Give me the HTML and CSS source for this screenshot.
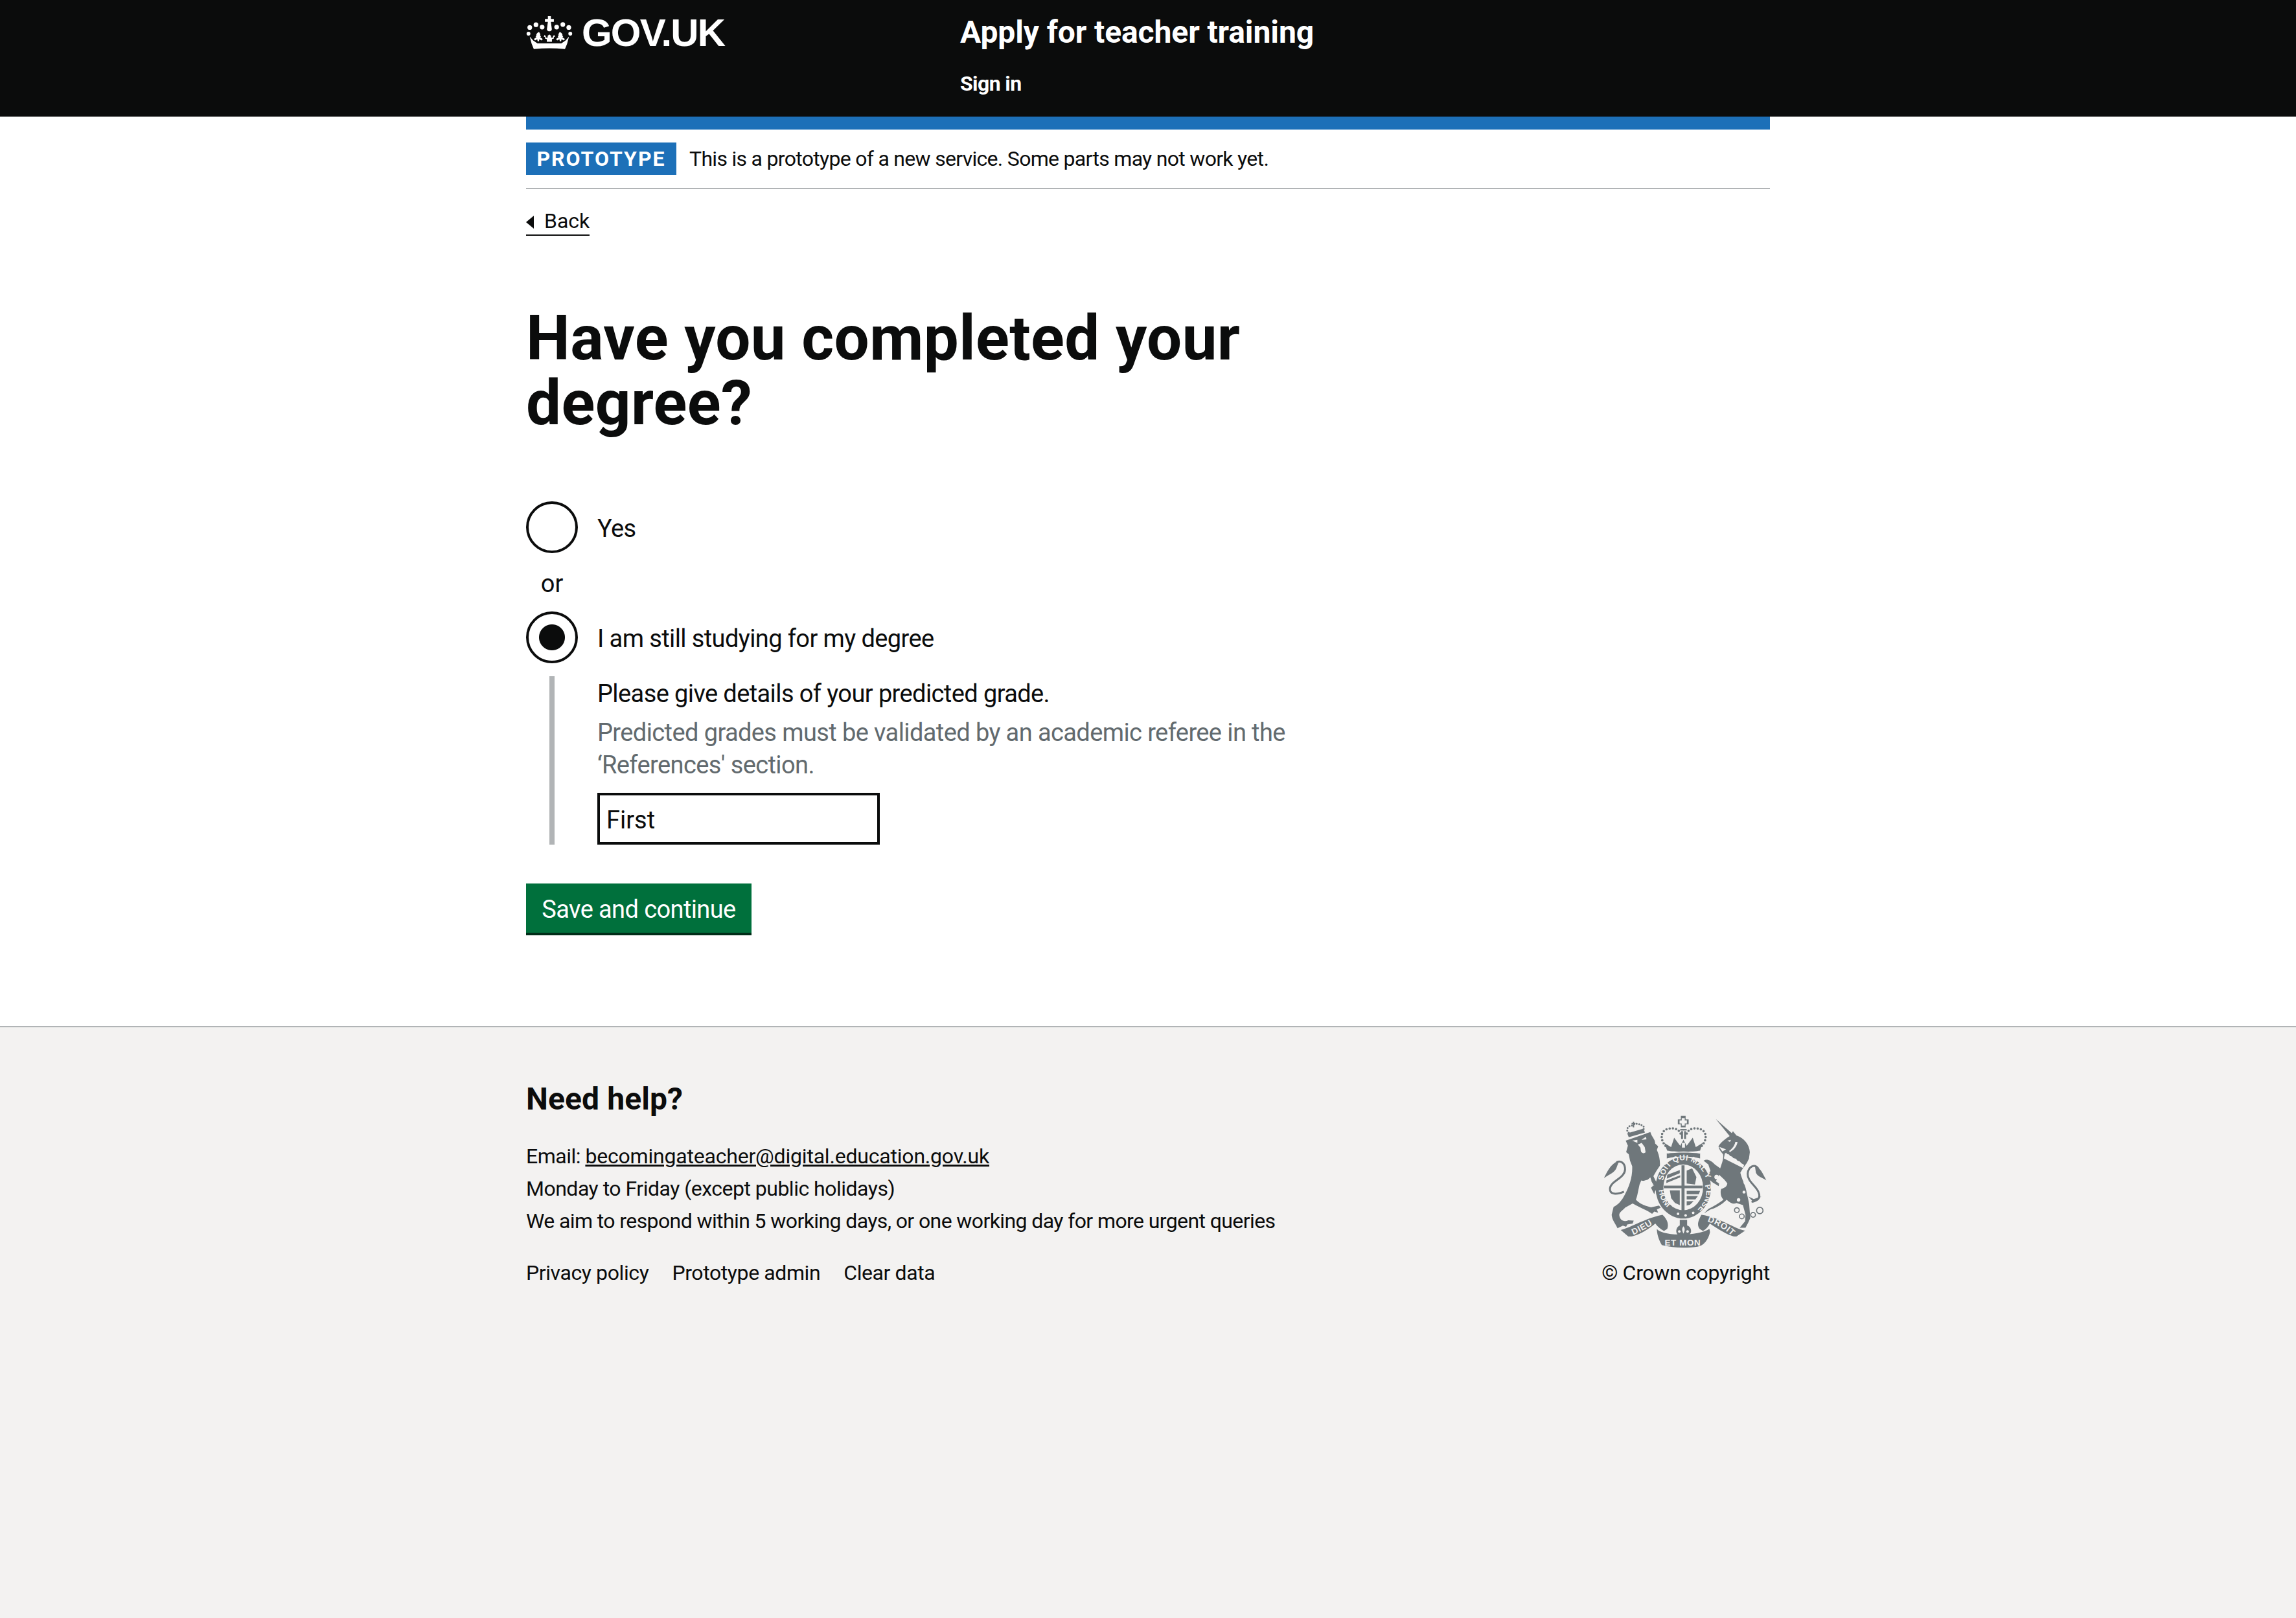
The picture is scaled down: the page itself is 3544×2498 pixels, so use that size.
FILE: index.html
```html
<!DOCTYPE html>
<html lang="en">
<head>
    <meta charset="UTF-8">
    <title>Have you completed your degree? - Apply for teacher training</title>
    <link rel="stylesheet" href="styles.css">
</head>
<body>
    <header class="header">
        <div class="container header-inner">
            <a class="logo" href="#">
                <svg class="crown" viewBox="36 33 216 158" aria-hidden="true">
                    <g fill="#fff">
                        <circle cx="52" cy="89" r="11"/><circle cx="81" cy="76" r="11"/><circle cx="110" cy="87" r="11"/>
                        <circle cx="178" cy="87" r="11"/><circle cx="207" cy="75" r="11"/><circle cx="235" cy="89" r="11"/>
                        <circle cx="46" cy="118" r="9"/><circle cx="242" cy="118" r="9"/>
                        <path d="M137 36h14v13h14v14h-14l4 30c2 8-2 14-11 14s-13-6-11-14l4-30h-14V49h14z"/>
                        <path d="M144 122l8 6v8h9v-7l6-5 3 9h-5v8l-9 3v12h-24v-12l-9-3v-8h-5l3-9 6 5v7h9v-8z"/>
                        <path d="M95 110c5 6 8 12 6 18l4 4-4 3 12 8-6 7-10-6-2 10H89l-2-10-10 6-6-7 12-8-4-3 4-4c-2-6 1-12 12-18z"/>
                        <path d="M193 110c-5 6-8 12-6 18l-4 4 4 3-12 8 6 7 10-6 2 10h6l2-10 10 6 6-7-12-8 4-3-4-4c2-6-1-12-12-18z"/>
                        <path d="M52 132l16 18 20 14h112l20-14 16-18-9 34-10 24c-50-5-96-5-146 0l-10-24z"/>
                    </g>
                </svg>
                <span class="logo-text">GOV.UK</span>
            </a>
            <div class="service">
                <a class="service-name" href="#">Apply for teacher training</a>
                <a class="sign-in" href="#">Sign in</a>
            </div>
        </div>
    </header>

    <div class="container">
        <div class="blue-bar"></div>
        <div class="phase-banner">
            <strong class="tag">Prototype</strong>
            <span class="phase-text">This is a prototype of a new service. Some parts may not work yet.</span>
        </div>
        <a class="back-link" href="#">Back</a>

        <main class="main">
            <h1 class="heading">Have you completed your degree?</h1>

            <form class="form">
                <div class="radio">
                    <input class="radio-input" type="radio" name="degree" id="degree-yes">
                    <label class="radio-label" for="degree-yes">Yes</label>
                </div>
                <div class="radio-divider">or</div>
                <div class="radio">
                    <input class="radio-input" type="radio" name="degree" id="degree-no" checked>
                    <label class="radio-label" for="degree-no">I am still studying for my degree</label>
                </div>
                <div class="conditional">
                    <label class="field-label" for="grade">Please give details of your predicted grade.</label>
                    <div class="hint">Predicted grades must be validated by an academic referee in the ‘References' section.</div>
                    <input class="text-input" type="text" id="grade" value="First">
                </div>
                <button class="button" type="button">Save and continue</button>
            </form>
        </main>
    </div>

    <footer class="footer">
        <div class="container footer-inner">
            <div class="footer-help">
                <h2 class="footer-heading">Need help?</h2>
                <p class="footer-line">Email: <a class="footer-email" href="#">becomingateacher@digital.education.gov.uk</a></p>
                <p class="footer-line">Monday to Friday (except public holidays)</p>
                <p class="footer-line footer-line-long">We aim to respond within 5 working days, or one working day for more urgent queries</p>
                <ul class="footer-links">
                    <li><a href="#">Privacy policy</a></li>
                    <li><a href="#">Prototype admin</a></li>
                    <li><a href="#">Clear data</a></li>
                </ul>
            </div>
            <div class="footer-crest">
                <svg class="crest" viewBox="105 62 755 620" aria-hidden="true">
                    <defs>
                        <path id="garter-top" d="M381 368C392 310 430 272 476 272S562 310 578 352"/>
                        <path id="garter-right" d="M573 388C590 430 575 470 535 505"/>
                        <path id="garter-left" d="M361 410C365 445 380 475 405 495"/>
                        <path id="ribbon-left" d="M243 618C280 602 320 580 352 556"/>
                        <path id="ribbon-right" d="M585 556C625 568 668 592 702 626"/>
                    </defs>
                    <g class="crest-ink">
                        <!-- lion -->
                        <g transform="translate(0 60)">
                            <path d="M208 122L322 82C328 105 345 115 344 135L358 148L352 165C362 185 368 215 366 238L350 262L335 288L322 256L345 305L375 345L382 362L362 360L345 352L340 370L325 340L335 330L322 302L305 312L280 306L272 325C265 355 262 380 255 395C275 415 300 425 325 430L362 422L370 432L352 440L358 455L340 450L330 460C300 440 270 430 240 412L205 432C195 445 180 450 178 465C180 490 200 500 220 490L245 492L240 505L215 510L210 520L195 515L170 527C160 505 145 490 143 465L152 428C172 420 190 400 205 370C225 330 240 290 238 240L228 215L222 185L210 175L218 145Z"/>
                            <path class="crest-line" d="M200 358C165 372 135 372 135 345C135 310 205 295 205 255C205 225 185 212 165 222"/>
                            <path d="M178 215C140 225 120 270 108 295C135 275 160 270 168 240Z"/>
                            <path d="M215 88L290 66L297 84L222 106Z"/>
                            <path class="crest-line-thin" d="M222 85C205 72 220 50 240 52C250 40 270 42 275 50C290 48 298 62 288 72"/>
                            <path d="M235 40h6v-6h6v6h6v6h-6v14h-6V46h-6z"/>
                        </g>
                        <!-- unicorn -->
                        <g transform="translate(450 60)">
                            <path d="M175 22L252 90L240 102Z"/>
                            <path d="M187 148C200 125 225 110 240 100L254 78L270 98C305 110 330 140 332 175L328 205L318 225L300 250L288 270C295 300 310 325 315 350C322 385 330 410 330 430L334 480L325 500L312 525L285 525L310 495L312 465L300 420L270 410C255 420 235 405 225 395C200 420 170 435 150 440L120 458L140 438C165 425 190 410 210 395C195 380 195 355 200 345C215 340 225 335 228 320C215 300 200 290 190 280L175 310L190 320L188 332L160 315L130 290L150 262L140 232L118 215C130 205 150 210 170 232L195 250C203 225 212 205 208 185C200 175 190 165 187 148Z"/>
                            <path class="crest-line" d="M340 405C365 400 385 390 372 360C360 330 320 310 322 275C325 240 355 228 370 250"/>
                            <path d="M355 235C380 245 395 280 408 305C385 290 370 290 360 270Z"/>
                            <path d="M325 380L350 408L385 380L350 392Z"/>
                            <circle class="crest-ring" cx="272" cy="443" r="11"/><circle class="crest-ring" cx="295" cy="472" r="11"/>
                            <circle class="crest-ring" cx="347" cy="465" r="11"/><circle class="crest-ring" cx="378" cy="445" r="15"/>
                        </g>
                        <!-- crown -->
                        <path d="M400 228C430 234 520 234 552 228L564 192L532 212L518 168L490 206L475 178L460 206L432 168L418 212L386 192Z"/>
                        <path d="M398 240C440 232 510 232 552 240L552 264C510 252 440 252 398 264Z"/>
                        <path d="M463 67h22v17h14v22h-14v14h-22v-14h-14V84h14z"/>
                        <rect x="464" y="138" width="9" height="36"/><rect x="478" y="138" width="9" height="36"/>
                        <rect x="460" y="128" width="30" height="7"/>
                        <path class="crest-dots" d="M392 206C362 170 372 132 408 126C435 122 455 130 462 150M560 206C590 170 580 132 544 126C517 122 497 130 490 150"/>
                        <!-- garter and shield -->
                        <ellipse cx="474" cy="400" rx="128" ry="142"/>
                        <ellipse class="crest-bg" cx="474" cy="398" rx="92" ry="106"/>
                        <rect x="466" y="296" width="14" height="212"/>
                        <rect x="384" y="390" width="180" height="12"/>
                        <path d="M400 340L458 318V332L398 358ZM396 366L460 342V352L396 378ZM490 320L515 310L535 350L528 385L490 380ZM490 414H552L546 430H490ZM490 438H542L530 454H490ZM490 462H522L505 478L490 482ZM412 412H458V480L436 470L418 448Z"/>
                        <!-- motto ribbon -->
                        <path d="M185 595C230 585 300 540 378 525C395 540 410 565 400 590L385 600C370 590 355 580 345 565C310 595 250 630 220 625Z"/>
                        <path d="M760 598C710 590 640 535 558 525C545 550 535 570 550 590L565 600C580 590 590 580 597 565C640 595 700 630 720 625Z"/>
                        <path d="M352 590C375 625 545 625 595 590L598 605C590 640 570 668 540 672C480 680 430 678 375 665C360 640 352 610 352 590Z"/>
                        <path d="M458 548H492V574C505 578 512 590 510 604C505 622 490 622 475 630C460 622 445 622 442 604C440 590 448 578 458 574Z"/>
                    </g>
                    <g class="crest-details">
                        <!-- lion face -->
                        <path d="M238 182L262 192L262 178Z"/>
                        <path d="M280 178L302 164L304 176Z"/>
                        <path d="M264 200L282 192L296 212L300 236C292 244 280 240 278 228L276 214Z"/>
                        <path d="M285 370L310 362L322 352L328 372L340 392L320 375L290 378Z"/>
                        <!-- unicorn face, collar and spots -->
                        <g transform="translate(450 60)">
                            <path d="M190 150L222 162L205 172Z"/>
                            <path d="M228 122L245 118L240 128Z"/>
                            <path d="M275 128C272 150 258 165 240 175L236 170C250 160 262 145 265 128Z"/>
                            <path d="M216 182L222 178L228 184L236 186L240 192L250 196L256 203L268 206L274 214L286 218L292 226L306 234L300 248L212 204Z"/>
                            <circle cx="305" cy="360" r="7"/><circle cx="280" cy="396" r="8"/><circle cx="312" cy="316" r="9"/>
                            <circle cx="190" cy="205" r="9"/><circle cx="178" cy="290" r="10"/>
                        </g>
                        <path d="M400 238C440 230 510 230 552 238L552 242C510 236 440 236 400 242Z"/>
                        <path d="M467 78h14v10h10v14h-10v10h-14v-10h-10V88h10z"/>
                        <path d="M468 192h14v22h-14z"/>
                        <circle cx="450" cy="520" r="6"/><circle cx="485" cy="528" r="6"/><circle cx="520" cy="516" r="6"/>
                        <path d="M475 578C485 590 480 600 475 612C470 600 465 590 475 578Z"/>
                        <circle cx="456" cy="602" r="6"/><circle cx="494" cy="602" r="6"/>
                    </g>
                    <g class="crest-text">
                        <text><textPath href="#garter-top">SOIT QUI MAL Y</textPath></text>
                        <text><textPath href="#garter-right">PENSE</textPath></text>
                        <text><textPath href="#garter-left">HONI</textPath></text>
                        <text class="crest-motto"><textPath href="#ribbon-left">DIEU</textPath></text>
                        <text class="crest-motto"><textPath href="#ribbon-right">DROIT</textPath></text>
                        <text class="crest-motto" x="388" y="668">ET MON</text>
                    </g>
                </svg>
                <a class="copyright" href="#">© Crown copyright</a>
            </div>
        </div>
    </footer>
</body>
</html>
```

FILE: styles.css
```css
body {
    margin: 0;
    min-height: 2498px;
    font-family: Roboto, "Noto Sans", Arial, sans-serif;
    color: #0b0c0c;
    background-color: #fff;
    display: flex;
    flex-direction: column;
}

a {
    color: inherit;
    text-decoration: none;
}

.container {
    width: 1920px;
    margin: 0 auto;
}

.header {
    height: 180px;
    background-color: #0b0c0c;
    color: #fff;
}

.header-inner {
    display: flex;
}

.logo {
    width: 670px;
    height: 100px;
    display: flex;
    align-items: center;
    gap: 14px;
}

.crown {
    width: 72px;
    height: 52px;
}

.logo-text {
    font-family: "Liberation Sans", Arial, sans-serif;
    font-size: 60px;
    font-weight: 700;
    letter-spacing: -1.8px;
}

.service {
    display: flex;
    flex-direction: column;
    padding-top: 20px;
}

.service-name {
    font-size: 48px;
    font-weight: 700;
    line-height: 60px;
    letter-spacing: -0.1px;
}

.sign-in {
    margin-top: 29px;
    font-size: 32px;
    font-weight: 700;
    line-height: 40px;
    letter-spacing: -0.6px;
}

.blue-bar {
    height: 20px;
    background-color: #1d70b8;
}

.phase-banner {
    display: flex;
    align-items: center;
    gap: 20px;
    padding: 20px 0;
    border-bottom: 2px solid #b1b4b6;
}

.tag {
    width: 232px;
    height: 50px;
    line-height: 50px;
    text-align: center;
    box-sizing: border-box;
    background-color: #1d70b8;
    color: #fff;
    font-size: 32px;
    letter-spacing: 2px;
    text-transform: uppercase;
}

.phase-text {
    font-size: 32px;
    letter-spacing: -0.7px;
}

.back-link {
    display: inline-block;
    position: relative;
    margin-top: 30px;
    padding-left: 28px;
    font-size: 32px;
    line-height: 38px;
    padding-bottom: 2px;
    border-bottom: 2px solid #0b0c0c;
}

.back-link::before {
    content: "";
    position: absolute;
    left: 0;
    top: 11px;
    border-style: solid;
    border-width: 10px 12px 10px 0;
    border-color: transparent #0b0c0c transparent transparent;
}

.main {
    padding: 108px 0 140px;
}

.heading {
    width: 1250px;
    margin: 0 0 102px;
    font-size: 96px;
    line-height: 100px;
    font-weight: 700;
    letter-spacing: 0.4px;
}

.radio {
    display: flex;
    align-items: center;
    gap: 30px;
    height: 80px;
}

.radio-input {
    appearance: none;
    width: 80px;
    height: 80px;
    margin: 0;
    border: 4px solid #0b0c0c;
    border-radius: 50%;
    background: #fff;
}

.radio-input:checked {
    background: radial-gradient(circle, #0b0c0c 19.5px, #fff 20.5px);
}

.radio-label {
    padding-top: 4px;
    font-size: 38px;
    line-height: 50px;
    letter-spacing: -0.6px;
}

.radio-divider {
    width: 80px;
    height: 90px;
    line-height: 94px;
    text-align: center;
    font-size: 38px;
}

.conditional {
    width: 1216px;
    margin: 20px 0 60px 36px;
    padding-left: 66px;
    border-left: 8px solid #b1b4b6;
}

.field-label {
    display: block;
    padding-top: 2px;
    font-size: 38px;
    line-height: 50px;
    margin-bottom: 10px;
    letter-spacing: -0.6px;
}

.hint {
    color: #626a6e;
    font-size: 38px;
    line-height: 50px;
    margin-bottom: 18px;
    letter-spacing: -0.6px;
}

.text-input {
    display: block;
    width: 436px;
    height: 80px;
    box-sizing: border-box;
    padding: 12px 10px 8px;
    border: 4px solid #0b0c0c;
    border-radius: 0;
    font-family: inherit;
    font-size: 38px;
    color: #0b0c0c;
}

.button {
    display: block;
    width: 348px;
    height: 80px;
    padding: 4px 0 0;
    border: none;
    border-bottom: 4px solid #002d18;
    border-radius: 0;
    background-color: #00703c;
    color: #fff;
    font-family: inherit;
    font-size: 38px;
    letter-spacing: -0.6px;
}

.footer {
    flex: 1;
    border-top: 2px solid #b1b4b6;
    background-color: #f3f2f1;
}

.footer-inner {
    display: flex;
    justify-content: space-between;
    align-items: flex-end;
    padding-top: 81px;
}

.footer-heading {
    margin: 0 0 33px;
    font-size: 48px;
    line-height: 60px;
    font-weight: 700;
    letter-spacing: 0.1px;
}

.footer-line {
    margin: 0;
    font-size: 32px;
    line-height: 50px;
    letter-spacing: -0.5px;
}

.footer-line-long {
    letter-spacing: -0.6px;
}

.footer-email {
    letter-spacing: -0.2px;
    text-decoration: underline;
}

.footer-links {
    display: flex;
    gap: 36px;
    margin: 30px 0 0;
    padding: 0;
    list-style: none;
    font-size: 32px;
    line-height: 50px;
    letter-spacing: -0.4px;
}

.footer-crest {
    display: flex;
    flex-direction: column;
    align-items: flex-end;
}

.crest {
    display: block;
    width: 252px;
    height: 207px;
    margin: 0 5px 12px 0;
}

.crest-ink path,
.crest-ink ellipse,
.crest-ink rect {
    fill: #6f777b;
}

.crest-ink .crest-bg {
    fill: #f3f2f1;
}

.crest-ink .crest-dots {
    fill: none;
    stroke: #6f777b;
    stroke-width: 11;
    stroke-linecap: round;
    stroke-dasharray: 0 15;
}

.crest-ink .crest-line {
    fill: none;
    stroke: #6f777b;
    stroke-width: 9;
}

.crest-ink .crest-line-thin {
    fill: none;
    stroke: #6f777b;
    stroke-width: 9;
    stroke-linecap: round;
    stroke-dasharray: 0 12;
}

.crest-ring {
    fill: none;
    stroke: #6f777b;
    stroke-width: 5;
}

.crest-details {
    fill: #f3f2f1;
}

.crest-text {
    fill: #f3f2f1;
    font-family: "Liberation Sans", Arial, sans-serif;
    font-size: 36px;
    font-weight: 700;
    letter-spacing: 1px;
}

.crest-motto {
    font-size: 40px;
    letter-spacing: 2px;
}

.copyright {
    font-size: 32px;
    line-height: 50px;
    letter-spacing: -0.3px;
}
```
